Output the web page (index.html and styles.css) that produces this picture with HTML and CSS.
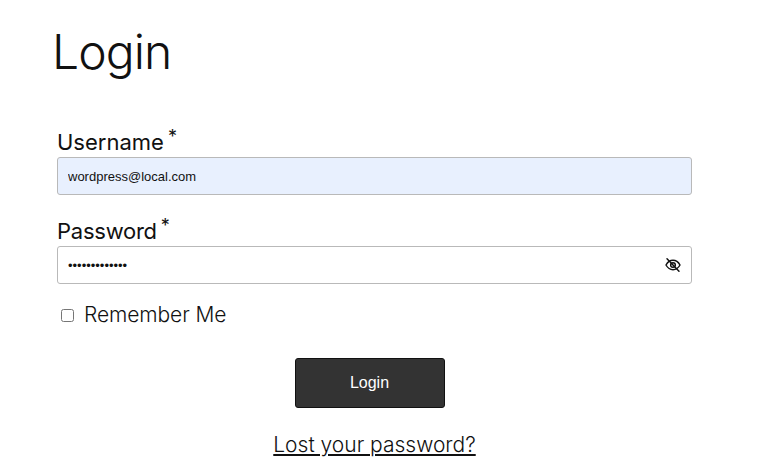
FILE: index.html
```html
<!DOCTYPE html>
<html lang="en">
<head>
  <meta charset="UTF-8" />
  <title>Login</title>
  <link rel="stylesheet" href="styles.css">
</head>
<body>
  <main class="login-page">
    <h1>Login</h1>
    <form class="login-form">
      <div class="field">
        <label for="username">Username<span class="req">*</span></label>
        <input class="text-input autofilled" id="username" type="text" value="wordpress@local.com">
      </div>
      <div class="field field-password">
        <label for="password">Password<span class="req">*</span></label>
        <div class="password-wrap">
          <input class="text-input" id="password" type="password" value="wordpress1234">
          <svg class="eye" viewBox="0 0 24 24" width="16" height="16" fill="none" stroke="#111" stroke-width="2.2" stroke-linecap="round" stroke-linejoin="round">
            <path d="M1.5 12S5.5 5 12 5s10.5 7 10.5 7-4 7-10.5 7S1.5 12 1.5 12z"/>
            <circle cx="12" cy="12" r="3.5"/>
            <path d="M3 2.5l18 19"/>
          </svg>
        </div>
      </div>
      <label class="remember"><input type="checkbox"> Remember Me</label>
      <div class="actions">
        <button type="submit">Login</button>
        <a href="#">Lost your password?</a>
      </div>
    </form>
  </main>
</body>
</html>
```

FILE: styles.css
```css
* {
  box-sizing: border-box;
}

body {
  margin: 0;
  background: #fff;
  color: #111;
  font-family: 'Inter', sans-serif;
}

.login-page {
  width: 692px;
  padding: 22px 0 0 57px;
}

h1 {
  margin: 0 0 0 -5px;
  font-size: 48px;
  line-height: 60px;
  font-weight: 300;
  letter-spacing: -0.9px;
}

.login-form {
  margin-top: 47px;
}

.field {
  margin-bottom: 23px;
}

.field label {
  display: block;
  font-size: 22px;
  line-height: 27px;
  font-weight: 400;
}

.field-password label {
  letter-spacing: -0.25px;
}

.req {
  position: relative;
  top: -7px;
  margin-left: 4px;
  font-size: 18px;
}

.text-input {
  display: block;
  width: 100%;
  height: 38px;
  padding: 0 10px;
  border: 1px solid #b9b9b9;
  border-radius: 3px;
  background: #fff;
  color: #111;
  font-family: 'Liberation Sans', sans-serif;
  font-size: 13px;
  outline: none;
}

.autofilled {
  background: #e8f0fe;
}

.password-wrap {
  position: relative;
}

.eye {
  position: absolute;
  top: 11px;
  right: 11px;
}

.remember {
  display: flex;
  align-items: center;
  gap: 10px;
  margin-top: -6px;
  padding-left: 4px;
  font-size: 21px;
  line-height: 28px;
  font-weight: 300;
  letter-spacing: -0.1px;
}

.remember input {
  width: 13px;
  height: 13px;
  margin: 0;
}

.actions {
  display: flex;
  flex-direction: column;
  align-items: center;
  gap: 23px;
  margin-top: 29px;
}

button {
  width: 150px;
  height: 50px;
  margin-right: 10px;
  border: 1px solid #111;
  border-radius: 3px;
  background: #333;
  color: #fff;
  font-family: 'Liberation Sans', sans-serif;
  font-size: 16px;
}

.actions a {
  color: #111;
  font-size: 21px;
  line-height: 28px;
  font-weight: 300;
}
```
